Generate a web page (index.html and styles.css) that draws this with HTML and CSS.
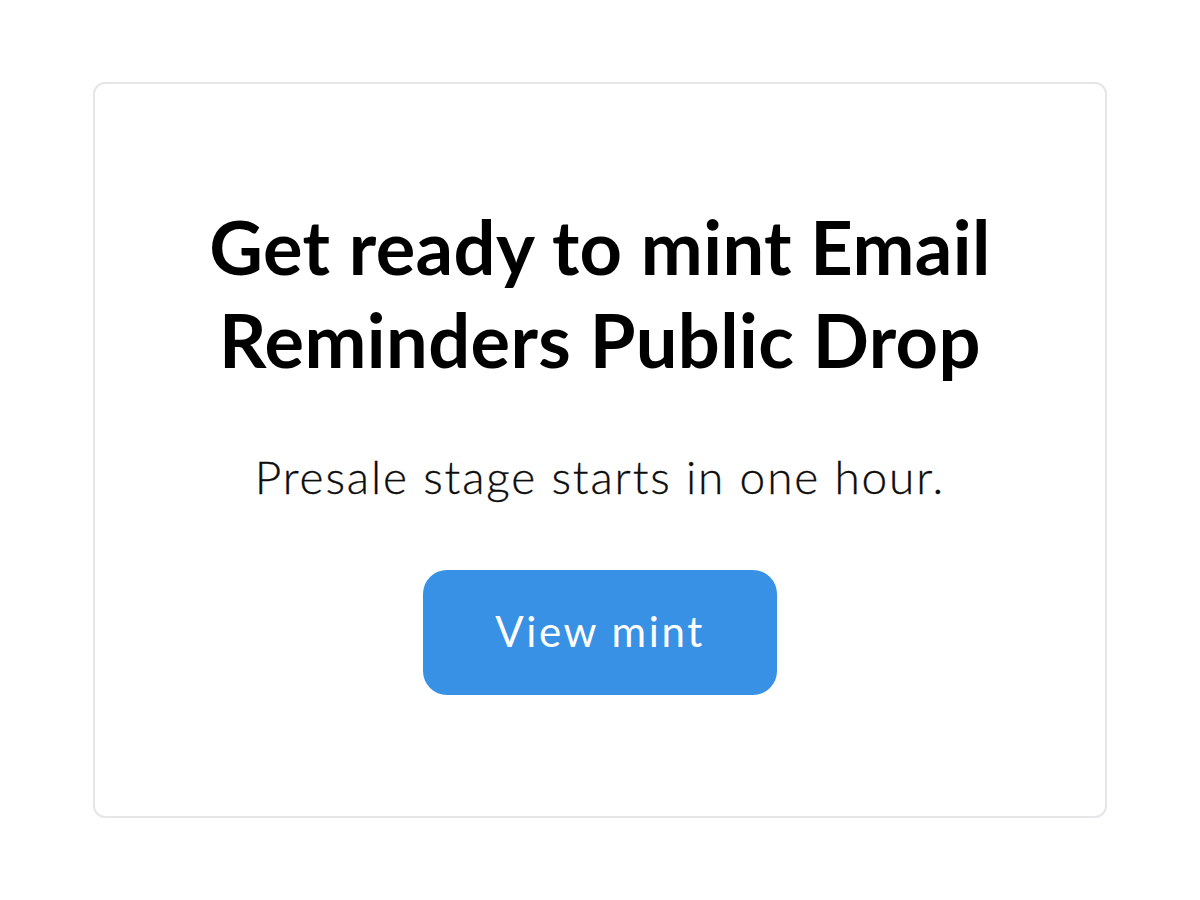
FILE: index.html
```html
<!DOCTYPE html>
<html lang="en">
<head>
<meta charset="utf-8">
<title>Mint reminder</title>
<link rel="stylesheet" href="styles.css">
</head>
<body>
<main class="page">
  <section class="card">
    <h1 class="title">Get ready to mint Email<br>Reminders Public Drop</h1>
    <p class="subtitle">Presale stage starts in one hour.</p>
    <a class="button" href="#">View mint</a>
  </section>
</main>
</body>
</html>
```

FILE: styles.css
```css
* { box-sizing: border-box; }
html, body { margin: 0; padding: 0; background: #ffffff; }
body {
  font-family: Lato, "Open Sans", "Liberation Sans", sans-serif;
  color: #000000;
}
.page {
  width: 1200px;
  height: 900px;
  padding: 82px 93px;
}
.card {
  width: 1014px;
  height: 736px;
  border: 2px solid #e6e6e9;
  border-radius: 12px;
  display: flex;
  flex-direction: column;
  align-items: center;
  text-align: center;
  padding-top: 116px;
}
.title {
  margin: 0;
  font-size: 74px;
  font-weight: 700;
  line-height: 93px;
  letter-spacing: 0.4px;
}
.subtitle {
  margin: 63px 0 0;
  font-size: 46px;
  font-weight: 300;
  line-height: 56px;
  letter-spacing: 1.85px;
  color: #0d0d0d;
  -webkit-text-stroke: 0.3px #0d0d0d;
}
.button {
  margin-top: 65px;
  width: 354px;
  height: 125px;
  border-radius: 24px;
  background: #3891e5;
  color: #ffffff;
  text-decoration: none;
  font-size: 42px;
  font-weight: 400;
  letter-spacing: 2.6px;
  display: flex;
  align-items: center;
  justify-content: center;
  padding-bottom: 4px;
}
```
